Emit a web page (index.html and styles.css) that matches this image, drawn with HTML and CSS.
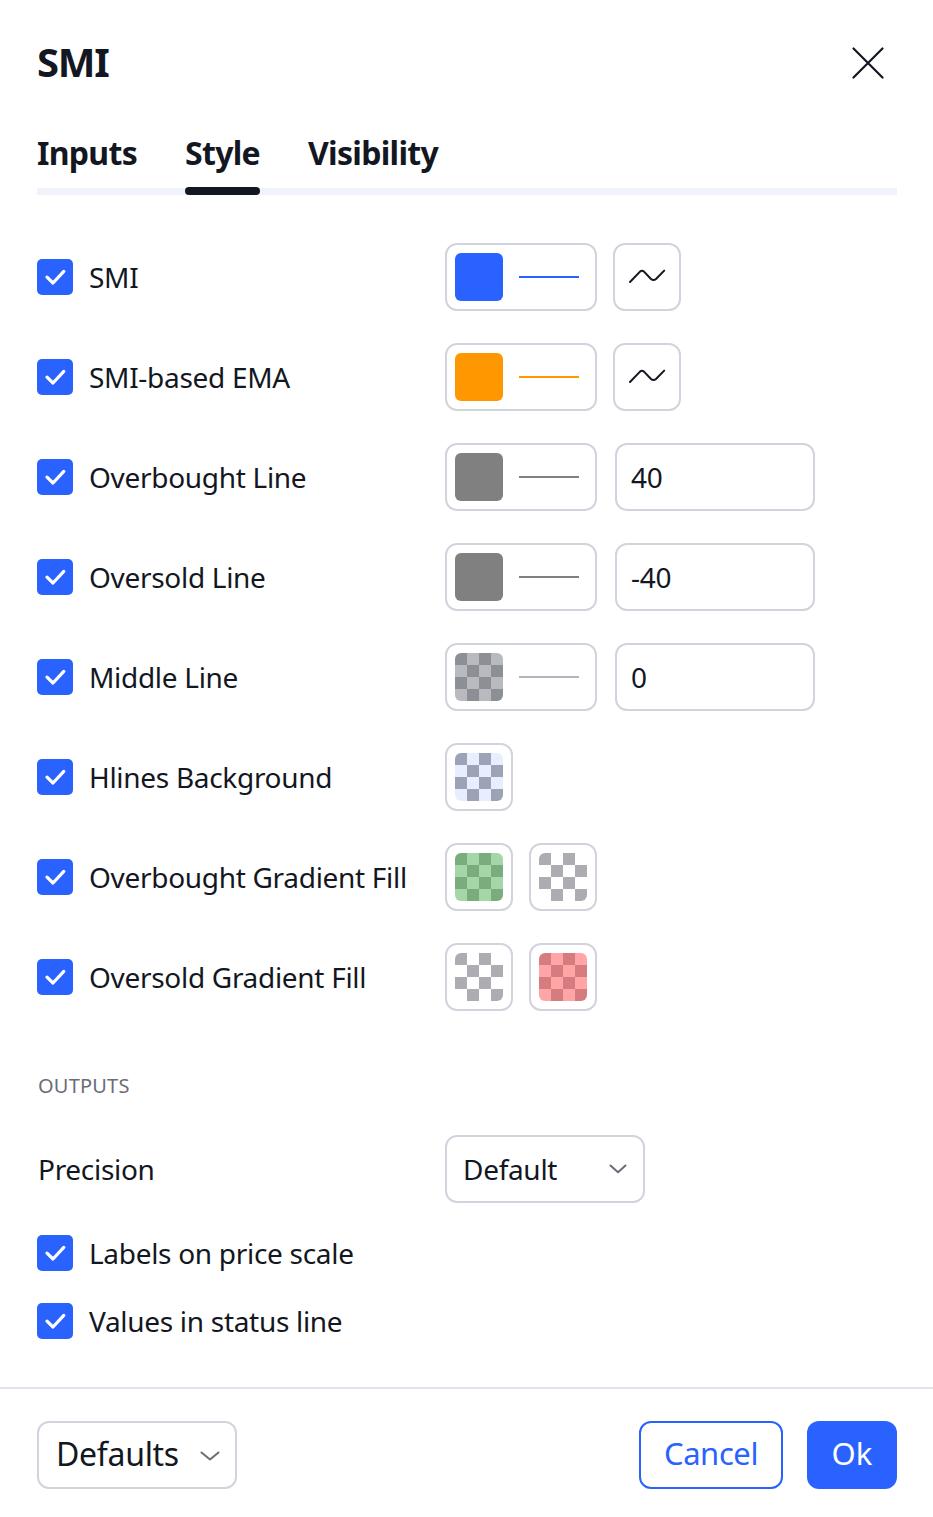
FILE: index.html
```html
<!DOCTYPE html>
<html lang="en">
<head>
<meta charset="utf-8">
<title>SMI</title>
<link rel="stylesheet" href="styles.css">
</head>
<body>
<div class="dialog">
  <header class="head">
    <h1 class="title">SMI</h1>
    <button class="close" aria-label="Close">
      <svg width="32" height="32" viewBox="0 0 32 32"><path d="M1.5 1.5L30.5 30.5M30.5 1.5L1.5 30.5" stroke="#131722" stroke-width="2.2" stroke-linecap="round" fill="none"/></svg>
    </button>
  </header>

  <nav class="tabs">
    <div class="tab"><span class="tab-text">Inputs</span><span class="tab-bar"></span></div>
    <div class="tab active"><span class="tab-text">Style</span><span class="tab-bar"></span></div>
    <div class="tab"><span class="tab-text">Visibility</span><span class="tab-bar"></span></div>
  </nav>

  <main class="content">
    <div class="row">
      <label class="check"><span class="box"><svg width="36" height="36" viewBox="0 0 36 36"><path d="M10 18.2L16 24L26.8 12.4" stroke="#fff" stroke-width="3.2" stroke-linecap="round" stroke-linejoin="round" fill="none"/></svg></span><span class="label">SMI</span></label>
      <div class="controls">
        <button class="color-btn"><span class="swatch blue"></span><span class="line blue"></span></button>
        <button class="icon-btn"><svg width="40" height="18" viewBox="0 0 40 18"><path d="M3 14L13 3.6Q15 2 17 3.6L24 11Q26.5 13 29 11L37.2 2.6" stroke="#131722" stroke-width="2" stroke-linecap="round" stroke-linejoin="round" fill="none"/></svg></button>
      </div>
    </div>

    <div class="row">
      <label class="check"><span class="box"><svg width="36" height="36" viewBox="0 0 36 36"><path d="M10 18.2L16 24L26.8 12.4" stroke="#fff" stroke-width="3.2" stroke-linecap="round" stroke-linejoin="round" fill="none"/></svg></span><span class="label">SMI-based EMA</span></label>
      <div class="controls">
        <button class="color-btn"><span class="swatch orange"></span><span class="line orange"></span></button>
        <button class="icon-btn"><svg width="40" height="18" viewBox="0 0 40 18"><path d="M3 14L13 3.6Q15 2 17 3.6L24 11Q26.5 13 29 11L37.2 2.6" stroke="#131722" stroke-width="2" stroke-linecap="round" stroke-linejoin="round" fill="none"/></svg></button>
      </div>
    </div>

    <div class="row">
      <label class="check"><span class="box"><svg width="36" height="36" viewBox="0 0 36 36"><path d="M10 18.2L16 24L26.8 12.4" stroke="#fff" stroke-width="3.2" stroke-linecap="round" stroke-linejoin="round" fill="none"/></svg></span><span class="label">Overbought Line</span></label>
      <div class="controls">
        <button class="color-btn"><span class="swatch gray"></span><span class="line gray"></span></button>
        <div class="field">40</div>
      </div>
    </div>

    <div class="row">
      <label class="check"><span class="box"><svg width="36" height="36" viewBox="0 0 36 36"><path d="M10 18.2L16 24L26.8 12.4" stroke="#fff" stroke-width="3.2" stroke-linecap="round" stroke-linejoin="round" fill="none"/></svg></span><span class="label">Oversold Line</span></label>
      <div class="controls">
        <button class="color-btn"><span class="swatch gray"></span><span class="line gray"></span></button>
        <div class="field">-40</div>
      </div>
    </div>

    <div class="row">
      <label class="check"><span class="box"><svg width="36" height="36" viewBox="0 0 36 36"><path d="M10 18.2L16 24L26.8 12.4" stroke="#fff" stroke-width="3.2" stroke-linecap="round" stroke-linejoin="round" fill="none"/></svg></span><span class="label">Middle Line</span></label>
      <div class="controls">
        <button class="color-btn"><span class="swatch chk-gray"></span><span class="line faint"></span></button>
        <div class="field">0</div>
      </div>
    </div>

    <div class="row">
      <label class="check"><span class="box"><svg width="36" height="36" viewBox="0 0 36 36"><path d="M10 18.2L16 24L26.8 12.4" stroke="#fff" stroke-width="3.2" stroke-linecap="round" stroke-linejoin="round" fill="none"/></svg></span><span class="label">Hlines Background</span></label>
      <div class="controls">
        <button class="swatch-btn"><span class="swatch chk-blue"></span></button>
      </div>
    </div>

    <div class="row">
      <label class="check"><span class="box"><svg width="36" height="36" viewBox="0 0 36 36"><path d="M10 18.2L16 24L26.8 12.4" stroke="#fff" stroke-width="3.2" stroke-linecap="round" stroke-linejoin="round" fill="none"/></svg></span><span class="label">Overbought Gradient Fill</span></label>
      <div class="controls">
        <button class="swatch-btn"><span class="swatch chk-green"></span></button>
        <button class="swatch-btn"><span class="swatch chk-clear"></span></button>
      </div>
    </div>

    <div class="row">
      <label class="check"><span class="box"><svg width="36" height="36" viewBox="0 0 36 36"><path d="M10 18.2L16 24L26.8 12.4" stroke="#fff" stroke-width="3.2" stroke-linecap="round" stroke-linejoin="round" fill="none"/></svg></span><span class="label">Oversold Gradient Fill</span></label>
      <div class="controls">
        <button class="swatch-btn"><span class="swatch chk-clear"></span></button>
        <button class="swatch-btn"><span class="swatch chk-red"></span></button>
      </div>
    </div>

    <div class="section-title">OUTPUTS</div>

    <div class="row">
      <span class="plain-label">Precision</span>
      <div class="controls">
        <button class="select"><span>Default</span><svg width="18" height="10" viewBox="0 0 18 10"><path d="M1.5 1.5L9 8.2L16.5 1.5" stroke="#6a6d78" stroke-width="2" stroke-linecap="round" stroke-linejoin="round" fill="none"/></svg></button>
      </div>
    </div>

    <label class="check solo"><span class="box"><svg width="36" height="36" viewBox="0 0 36 36"><path d="M10 18.2L16 24L26.8 12.4" stroke="#fff" stroke-width="3.2" stroke-linecap="round" stroke-linejoin="round" fill="none"/></svg></span><span class="label">Labels on price scale</span></label>

    <label class="check solo"><span class="box"><svg width="36" height="36" viewBox="0 0 36 36"><path d="M10 18.2L16 24L26.8 12.4" stroke="#fff" stroke-width="3.2" stroke-linecap="round" stroke-linejoin="round" fill="none"/></svg></span><span class="label">Values in status line</span></label>
  </main>

  <footer class="foot">
    <button class="defaults"><span>Defaults</span><svg width="20" height="10" viewBox="0 0 20 10"><path d="M1.5 1.5L10 8.5L18.5 1.5" stroke="#6a6d78" stroke-width="2" stroke-linecap="round" stroke-linejoin="round" fill="none"/></svg></button>
    <div class="actions">
      <button class="btn-cancel">Cancel</button>
      <button class="btn-ok">Ok</button>
    </div>
  </footer>
</div>
</body>
</html>
```

FILE: styles.css
```css
* { box-sizing: border-box; }

html, body {
  margin: 0;
  padding: 0;
  background: #ffffff;
}

body {
  font-family: "Noto Sans", "Open Sans", sans-serif;
  color: #131722;
  width: 933px;
}

button {
  font-family: inherit;
  color: inherit;
  background: #fff;
  margin: 0;
  padding: 0;
  cursor: pointer;
}

.dialog {
  width: 933px;
}

.head {
  height: 126px;
  display: flex;
  align-items: center;
  justify-content: space-between;
  padding: 0 0 0 37px;
}

.title {
  margin: 0;
  font-size: 40px;
  line-height: 48px;
  font-weight: 700;
  letter-spacing: -1.2px;
  padding-bottom: 2px;
}

.close {
  width: 44px;
  height: 44px;
  border: 0;
  display: flex;
  align-items: center;
  justify-content: center;
  margin-right: 43px;
  background: transparent;
}

.close svg { display: block; }

.tabs {
  margin: 0 36px 0 37px;
  padding-top: 5px;
  display: flex;
  gap: 48px;
  background: linear-gradient(#f0f3fa, #f0f3fa) left bottom / 100% 7px no-repeat;
}

.tab {
  display: flex;
  flex-direction: column;
  align-items: stretch;
}

.tab-text {
  font-size: 32px;
  line-height: 44px;
  font-weight: 700;
  letter-spacing: -0.7px;
  margin-bottom: 12px;
}

.tab-bar {
  height: 8px;
  border-radius: 4px;
  background: transparent;
}

.tab.active .tab-bar {
  background: #131722;
}

.content {
  padding: 48px 36px 48px 37px;
  display: flex;
  flex-direction: column;
  gap: 32px;
}

.row {
  display: grid;
  grid-template-columns: 408px auto;
  align-items: center;
  height: 68px;
}

.check {
  display: flex;
  align-items: center;
  gap: 16px;
}

.check.solo {
  height: 36px;
}

.box {
  width: 36px;
  height: 36px;
  border-radius: 5px;
  background: #2962ff;
  display: block;
  flex: none;
}

.box svg {
  display: block;
}

.label, .plain-label {
  font-size: 28px;
  line-height: 36px;
  letter-spacing: -0.3px;
  white-space: nowrap;
}

.plain-label {
  padding-left: 1px;
}

.controls {
  display: flex;
  align-items: center;
  gap: 16px;
}

.color-btn {
  width: 152px;
  height: 68px;
  border: 2px solid #d1d4dc;
  border-radius: 12px;
  padding: 8px 16px 8px 8px;
  display: flex;
  align-items: center;
  gap: 16px;
}

.swatch-btn, .icon-btn {
  width: 68px;
  height: 68px;
  border: 2px solid #d1d4dc;
  border-radius: 12px;
  padding: 8px;
  display: flex;
  align-items: center;
  justify-content: center;
}

.icon-btn svg { display: block; }

.swatch {
  width: 48px;
  height: 48px;
  border-radius: 6px;
  flex: none;
  display: block;
}

.line {
  width: 60px;
  height: 2px;
  display: block;
}

.blue { background: #2962ff; }
.orange { background: #ff9800; }
.gray { background: #808080; }
.line.gray { background: #808080; }
.line.faint { background: #b2b5be; }

.chk-gray {
  background: repeating-conic-gradient(#b9babe 0 25%, #8c8f96 0 50%) 0 0 / 24px 24px;
}
.chk-blue {
  background: repeating-conic-gradient(#e8eefd 0 25%, #9da3b6 0 50%) 0 0 / 24px 24px;
}
.chk-green {
  background: repeating-conic-gradient(#a5d6a7 0 25%, #7aad7e 0 50%) 0 0 / 24px 24px;
}
.chk-clear {
  background: repeating-conic-gradient(#ffffff 0 25%, #acadb2 0 50%) 0 0 / 24px 24px;
}
.chk-red {
  background: repeating-conic-gradient(#ffa5a5 0 25%, #d67c80 0 50%) 0 0 / 24px 24px;
}

.field {
  width: 200px;
  height: 68px;
  margin-left: 2px;
  border: 2px solid #d1d4dc;
  border-radius: 12px;
  padding: 0 14px;
  display: flex;
  align-items: center;
  font-size: 28px;
  letter-spacing: -0.3px;
}

.section-title {
  margin: 29px 0 3px 1px;
  font-size: 20px;
  line-height: 28px;
  color: #6a6d78;
  letter-spacing: 0.2px;
}

.select {
  width: 200px;
  height: 68px;
  border: 2px solid #d1d4dc;
  border-radius: 12px;
  padding: 0 16px 0 16px;
  display: flex;
  align-items: center;
  justify-content: space-between;
  font-size: 28px;
  letter-spacing: -0.3px;
}

.select svg, .defaults svg { display: block; }

.foot {
  border-top: 2px solid #e0e3eb;
  padding: 32px 36px 28px 37px;
  display: flex;
  justify-content: space-between;
  align-items: center;
}

.defaults {
  width: 200px;
  height: 68px;
  border: 2px solid #d1d4dc;
  border-radius: 12px;
  padding: 2px 15px 0 17px;
  display: flex;
  align-items: center;
  justify-content: space-between;
  font-size: 32px;
  letter-spacing: -0.3px;
  line-height: 40px;
}

.defaults span { margin-top: -4px; }

.actions {
  display: flex;
  gap: 24px;
}

.btn-cancel {
  width: 144px;
  height: 68px;
  border: 2px solid #2962ff;
  border-radius: 12px;
  color: #2962ff;
  font-size: 31px;
  letter-spacing: -0.4px;
  line-height: 40px;
  padding-bottom: 4px;
}

.btn-ok {
  width: 90px;
  height: 68px;
  border: 0;
  border-radius: 12px;
  background: #2962ff;
  color: #fff;
  font-size: 31px;
  line-height: 40px;
  padding-bottom: 4px;
}
```
